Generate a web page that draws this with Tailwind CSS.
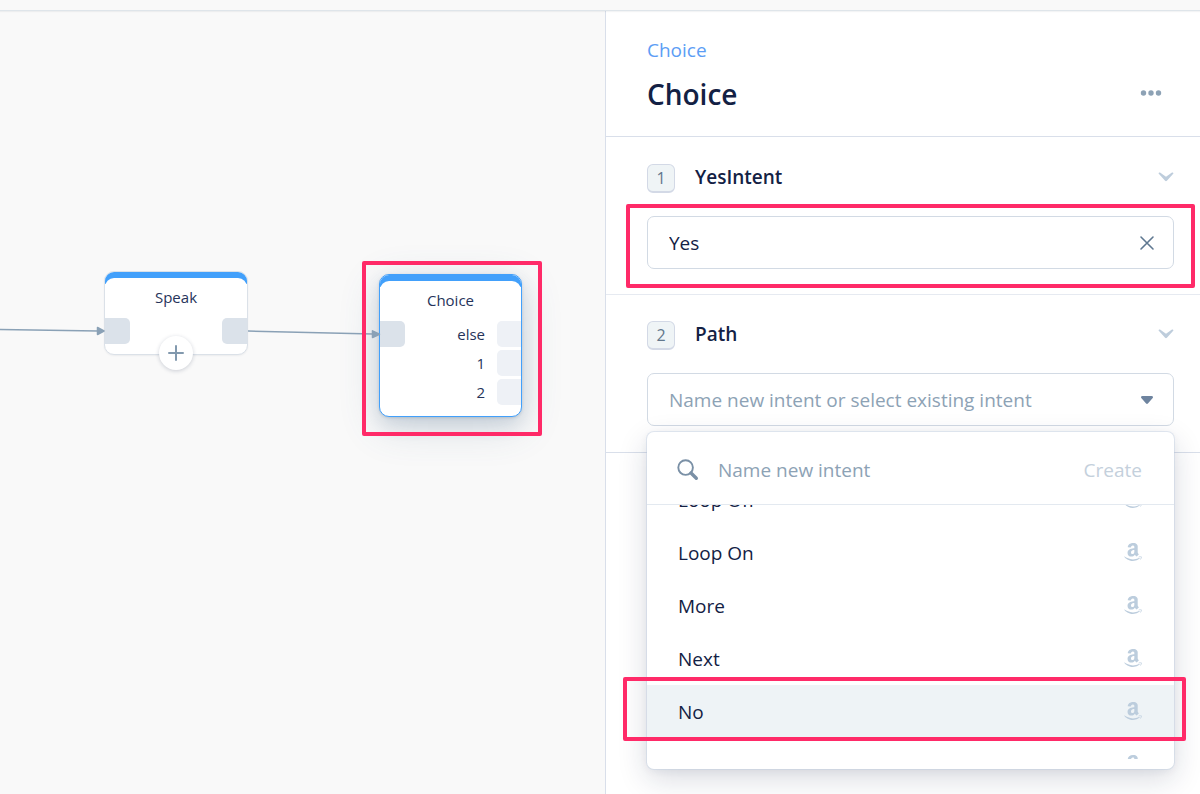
<!DOCTYPE html>
<html lang="en">
<head>
<meta charset="utf-8">
<meta name="viewport" content="width=device-width, initial-scale=1">
<title>Choice block</title>
<script src="https://cdn.jsdelivr.net/npm/@tailwindcss/browser@4"></script>
</head>
<body class="flex h-screen flex-col overflow-hidden bg-white font-['Open_Sans',sans-serif] text-[19px] text-[#132144]">
<svg class="hidden" aria-hidden="true">
  <symbol id="amazon" viewBox="0 32 448 448"><path fill="currentColor" d="M257.2 162.7c-48.7 1.8-169.5 15.5-169.5 117.5 0 109.5 138.3 114 183.5 43.2 6.5 10.2 35.4 37.5 45.3 46.8l56.8-56S341 288.9 341 261.4V114.3C341 89 316.5 32 228.7 32 140.7 32 94 87 94 136.3l73.5 6.8c16.3-49.5 54.2-49.5 54.2-49.5 40.7-.1 35.5 29.8 35.5 69.1zm0 86.8c0 80-84.2 68-84.2 17.2 0-47.2 50.5-56.7 84.2-57.8v40.6zm136 163.5c-7.7 10-70 67-174.5 67S34.2 408.5 9.7 379c-6.8-7.7 1-11.3 5.5-8.3C88.5 415.2 203 488.5 387.7 401c7.5-3.7 13.3 2 5.5 12zm39.8 2.2c-6.5 15.8-16 26.8-21.2 31-5.5 4.5-9.5 2.7-6.5-3.8s19.3-46.5 12.7-55c-6.5-8.3-37-4.3-48-3.2-10.8 1-13 2-14-.3-2.3-5.7 21.7-15.5 37.5-17.5 15.7-1.8 41-.8 46 5.7 3.7 5.1 0 27.1-6.5 43.1z"/></symbol>
  <symbol id="chevron" viewBox="0 0 16 10"><path fill="currentColor" d="M2 .6 8 4.700 14 .6q1.100-.4 1.400.3.2.6-.4 1.200L8.900 8.800Q8 9.600 7.100 8.800L1 2.100Q.4 1.500.6.9.9.2 2 .6z"/></symbol>
</svg>

<header class="relative z-10 h-[11px] shrink-0 border-b border-[#dfe5ea] bg-[#f9f9f9] shadow-[0_1px_1px_rgba(19,33,68,0.05)]"></header>

<div class="grid min-h-0 flex-1 grid-cols-[605fr_595fr]">
  <!-- Flow canvas -->
  <main class="relative overflow-hidden bg-[#f9f9f9] text-[15px] text-[#26345a]">
    <div class="absolute top-[260px] left-[104px] h-[84px] w-[144px] rounded-[10px] border border-[#dbe1e8] bg-white shadow-[0_1px_2px_rgba(19,33,68,0.06)]">
      <div class="h-full overflow-hidden rounded-[9px]">
        <div class="h-3 bg-[#42a0fb]"></div>
        <div class="-mt-[6px] rounded-t-[9px] bg-white pt-[9px] text-center leading-5">Speak</div>
        <div class="mt-[11px] flex justify-between">
          <span class="h-[26px] w-[25px] rounded-r-[5px] bg-[#dbe2ea]"></span>
          <span class="h-[26px] w-[25px] rounded-l-[5px] bg-[#dbe2ea]"></span>
        </div>
      </div>
      <button aria-label="Add step" class="absolute -bottom-4 left-[54px] flex size-[34px] items-center justify-center rounded-full bg-white text-[#8299ae] shadow-[0_1px_4px_rgba(19,33,68,0.2)]">
        <svg class="size-4" viewBox="0 0 16 16" fill="none" stroke="currentColor" stroke-width="2" stroke-linecap="round"><path d="M8 1v14M1 8h14"/></svg>
      </button>
    </div>

    <div class="absolute top-[263px] left-[379px] h-[143px] w-[143px] rounded-[10px] border border-[#42a0fb] bg-white shadow-[0_10px_40px_rgba(60,95,130,0.2),0_8px_18px_rgba(60,95,130,0.14),0_1px_3px_rgba(60,95,130,0.2)]">
      <div class="h-full overflow-hidden rounded-[9px]">
        <div class="h-3 bg-[#42a0fb]"></div>
        <div class="-mt-[6px] rounded-t-[9px] bg-white pt-[9px] text-center leading-5">Choice</div>
        <div class="mt-[11px] flex justify-between">
          <span class="h-[26px] w-[25px] rounded-r-[5px] bg-[#dbe2ea]"></span>
          <ul class="flex flex-col gap-[3px] text-right leading-[26px]">
            <li class="flex justify-end gap-3">else<span class="h-[26px] w-6 rounded-l-[5px] bg-[#eef1f6]"></span></li>
            <li class="flex justify-end gap-3">1<span class="h-[26px] w-6 rounded-l-[5px] bg-[#eef1f6]"></span></li>
            <li class="flex justify-end gap-3">2<span class="h-[26px] w-6 rounded-l-[5px] bg-[#eef1f6]"></span></li>
          </ul>
        </div>
      </div>
    </div>

    <svg class="absolute top-[300px] left-0 h-10 w-[385px]" viewBox="0 0 385 40" fill="#8aa1b6" stroke="#8aa1b6" stroke-width="1.500" aria-hidden="true">
      <path d="M0 18.500 98 20"/><path stroke-linejoin="round" d="M97.500 16.500 104 20l-6.500 3.500z"/>
      <path d="M248 20 373 23"/><path stroke-linejoin="round" d="M372.500 19.800 379.500 23.200l-7 3.300z"/>
    </svg>
    <div class="pointer-events-none absolute top-[250px] left-[362px] h-[175px] w-[180px] rounded-[2px] border-4 border-[#ff2a68]"></div>
  </main>

  <!-- Block settings -->
  <aside class="border-l border-[#d9dfea] bg-white">
    <div class="flex items-end justify-between border-b border-[#d9dfea] pt-[26px] pr-[38px] pb-[22px] pl-[41px]">
      <div>
        <a href="#" class="block leading-[26px] text-[#5c9df5]">Choice</a>
        <h1 class="mt-[11px] text-[28px] leading-10 font-semibold">Choice</h1>
      </div>
      <button aria-label="More options" class="mb-[13px] text-[#8da2b5]">
        <svg class="h-4 w-[22px]" viewBox="0 0 22 16" fill="currentColor"><circle cx="3.500" cy="8" r="2.700"/><circle cx="11" cy="8" r="2.700"/><circle cx="18.500" cy="8" r="2.700"/></svg>
      </button>
    </div>

    <section class="relative border-b border-[#e6eaf1] pt-[27px] pr-[26px] pb-[25px] pl-[41px]">
      <div class="flex items-start">
        <span class="flex h-[29px] w-7 items-center justify-center rounded-md border border-b-2 border-[#d3d9e6] bg-[#eff4f6] text-base font-medium text-[#62778c]">1</span>
        <h2 class="ml-5 flex-1 leading-[26px] font-semibold">YesIntent</h2>
        <button aria-label="Collapse YesIntent" class="flex h-[26px] items-center text-[#becddc]"><svg class="h-[10px] w-4"><use href="#chevron"/></svg></button>
      </div>
      <div class="mt-[23px] flex h-[53px] items-center rounded-[7px] border border-[#d2dae4] bg-white pr-[18px] pl-[21px]">
        <input type="text" value="Yes" aria-label="Intent" class="min-w-0 flex-1 leading-7 outline-none">
        <button aria-label="Clear intent" class="text-[#5f7891]"><svg class="size-4" viewBox="0 0 16 16" fill="none" stroke="currentColor" stroke-width="1.600" stroke-linecap="round"><path d="m2 2 12 12M14 2 2 14"/></svg></button>
      </div>
      <div class="pointer-events-none absolute top-[67px] right-[5px] left-[20px] h-[84px] rounded-[2px] border-4 border-[#ff2a68]"></div>
    </section>

    <section class="border-b border-[#d9dfea] pt-[26px] pr-[26px] pb-[26px] pl-[41px]">
      <div class="flex items-start">
        <span class="flex h-[29px] w-7 items-center justify-center rounded-md border border-b-2 border-[#d3d9e6] bg-[#eff4f6] text-base font-medium text-[#62778c]">2</span>
        <h2 class="ml-5 flex-1 leading-[26px] font-semibold">Path</h2>
        <button aria-label="Collapse Path" class="flex h-[26px] items-center text-[#becddc]"><svg class="h-[10px] w-4"><use href="#chevron"/></svg></button>
      </div>
      <div class="relative mt-[23px]">
        <div class="flex h-[53px] items-center rounded-[7px] border border-[#d2dae4] bg-white pr-5 pl-[21px]">
          <input type="text" role="combobox" aria-expanded="true" aria-controls="intents" aria-label="Intent" placeholder="Name new intent or select existing intent" class="min-w-0 flex-1 leading-7 outline-none placeholder:text-[#8da2b5]">
          <button aria-label="Toggle intents" class="text-[#6e849f]"><svg class="h-2 w-3" viewBox="0 0 12 8" fill="currentColor"><path d="M1.500 0h9Q12 0 12 1.200 12 1.800 11.500 2.300L6.900 7.500Q6 8.300 5.100 7.500L.5 2.300Q0 1.800 0 1.200 0 0 1.500 0z"/></svg></button>
        </div>

        <div class="absolute inset-x-0 top-full z-10 mt-[6px] rounded-[7px] bg-white pb-[10px] shadow-[0_0_0_1px_rgba(190,205,225,0.4),0_10px_30px_rgba(19,33,68,0.16),0_2px_8px_rgba(19,33,68,0.06)]">
          <div class="flex h-[73px] items-center border-b border-[#e3e9f0] pt-[3px] pr-8 pl-[30px]">
            <svg class="size-[22px] text-[#7a90a6]" viewBox="0 0 22 22" fill="none" stroke="currentColor" aria-hidden="true"><circle cx="8.600" cy="8.600" r="7.300" stroke-width="1.900"/><path d="m14 14 5.300 5.200" stroke-width="3.400" stroke-linecap="round"/></svg>
            <input type="text" aria-label="New intent" placeholder="Name new intent" class="ml-[19px] min-w-0 flex-1 leading-7 outline-none placeholder:text-[#8da2b5]">
            <button class="leading-7 text-[#c4d0dc]">Create</button>
          </div>
          <div class="h-[254px] overflow-hidden">
            <ul id="intents" class="-mt-8">
              <li><button class="flex h-[53px] w-full items-center justify-between pt-[2px] pr-8 pl-[31px]">Loop Off<svg class="mb-1 size-[18px] text-[#bccddd]"><use href="#amazon"/></svg></button></li>
              <li><button class="flex h-[53px] w-full items-center justify-between pt-[2px] pr-8 pl-[31px]">Loop On<svg class="mb-1 size-[18px] text-[#bccddd]"><use href="#amazon"/></svg></button></li>
              <li><button class="flex h-[53px] w-full items-center justify-between pt-[2px] pr-8 pl-[31px]">More<svg class="mb-1 size-[18px] text-[#bccddd]"><use href="#amazon"/></svg></button></li>
              <li><button class="flex h-[53px] w-full items-center justify-between pt-[2px] pr-8 pl-[31px]">Next<svg class="mb-1 size-[18px] text-[#bccddd]"><use href="#amazon"/></svg></button></li>
              <li><button class="flex h-[53px] w-full items-center justify-between bg-[#eef3f6] pt-[2px] pr-8 pl-[31px]">No<svg class="mb-1 size-[18px] text-[#bccddd]"><use href="#amazon"/></svg></button></li>
              <li><button class="flex h-[53px] w-full items-center justify-end pt-[2px] pr-8 pl-[31px]"><svg class="mb-1 size-[18px] text-[#bccddd]"><use href="#amazon"/></svg></button></li>
            </ul>
          </div>
          <div class="pointer-events-none absolute -right-3 bottom-7 -left-6 h-[64px] rounded-[2px] border-4 border-[#ff2a68]"></div>
        </div>
      </div>
    </section>
  </aside>
</div>
</body>
</html>
